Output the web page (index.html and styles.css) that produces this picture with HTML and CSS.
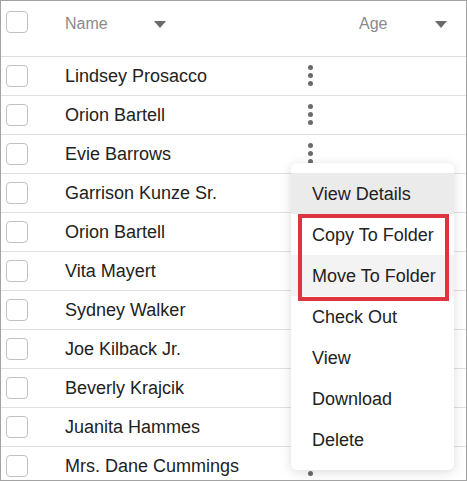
FILE: index.html
```html
<!DOCTYPE html>
<html>
<head>
<meta charset="utf-8">
<link rel="stylesheet" href="styles.css">
</head>
<body>
<div class="grid">
  <div class="head">
    <div class="cb-cell"><span class="cb"></span></div>
    <div class="h-name"><span>Name</span><span class="tri"></span></div>
    <div class="spacer"></div>
    <div class="h-age"><span>Age</span><span class="tri"></span></div>
  </div>
  <div class="row"><div class="cb-cell"><span class="cb"></span></div><div class="name">Lindsey Prosacco</div><div class="kebab"><i></i><i></i><i></i></div></div>
  <div class="row"><div class="cb-cell"><span class="cb"></span></div><div class="name">Orion Bartell</div><div class="kebab"><i></i><i></i><i></i></div></div>
  <div class="row"><div class="cb-cell"><span class="cb"></span></div><div class="name">Evie Barrows</div><div class="kebab"><i></i><i></i><i></i></div></div>
  <div class="row"><div class="cb-cell"><span class="cb"></span></div><div class="name">Garrison Kunze Sr.</div><div class="kebab"><i></i><i></i><i></i></div></div>
  <div class="row"><div class="cb-cell"><span class="cb"></span></div><div class="name">Orion Bartell</div><div class="kebab"><i></i><i></i><i></i></div></div>
  <div class="row"><div class="cb-cell"><span class="cb"></span></div><div class="name">Vita Mayert</div><div class="kebab"><i></i><i></i><i></i></div></div>
  <div class="row"><div class="cb-cell"><span class="cb"></span></div><div class="name">Sydney Walker</div><div class="kebab"><i></i><i></i><i></i></div></div>
  <div class="row"><div class="cb-cell"><span class="cb"></span></div><div class="name">Joe Kilback Jr.</div><div class="kebab"><i></i><i></i><i></i></div></div>
  <div class="row"><div class="cb-cell"><span class="cb"></span></div><div class="name">Beverly Krajcik</div><div class="kebab"><i></i><i></i><i></i></div></div>
  <div class="row"><div class="cb-cell"><span class="cb"></span></div><div class="name">Juanita Hammes</div><div class="kebab"><i></i><i></i><i></i></div></div>
  <div class="row"><div class="cb-cell"><span class="cb"></span></div><div class="name">Mrs. Dane Cummings</div><div class="kebab"><i></i><i></i><i></i></div></div>

  <div class="menu">
    <div class="item active">View Details</div>
    <div class="item">Copy To Folder</div>
    <div class="item hover">Move To Folder</div>
    <div class="item">Check Out</div>
    <div class="item">View</div>
    <div class="item">Download</div>
    <div class="item">Delete</div>
  </div>
  <div class="mark"></div>
</div>
</body>
</html>
```

FILE: styles.css
```css
html, body {
  margin: 0;
  padding: 0;
  background: #fff;
}
body {
  font-family: "Liberation Sans", Arial, sans-serif;
}
.grid {
  position: relative;
  box-sizing: border-box;
  width: 467px;
  height: 481px;
  border: 1px solid #a3a3a3;
  overflow: hidden;
  background: #fff;
}
.head {
  display: flex;
  align-items: flex-start;
  height: 56px;
  box-sizing: border-box;
  padding-top: 10px;
  border-bottom: 1px solid #dedede;
  color: #8a8a8a;
  font-size: 16px;
  line-height: 22px;
}
.cb-cell {
  width: 64px;
  padding-left: 5px;
  box-sizing: border-box;
  display: flex;
  align-items: center;
  flex: none;
}
.cb {
  display: block;
  width: 22px;
  height: 22px;
  box-sizing: border-box;
  border: 1px solid #c2c2c2;
  border-radius: 4px;
  background: #fff;
}
.h-name {
  width: 110px;
  padding-right: 9px;
  margin-top: 2px;
  box-sizing: border-box;
  display: flex;
  justify-content: space-between;
  align-items: center;
}
.spacer { flex: 1; }
.h-age {
  width: 107px;
  padding-right: 19px;
  margin-top: 2px;
  box-sizing: border-box;
  display: flex;
  justify-content: space-between;
  align-items: center;
}
.tri {
  width: 0;
  height: 0;
  border-left: 6.5px solid transparent;
  border-right: 6.5px solid transparent;
  border-top: 7px solid #6a6a6a;
}
.row {
  display: flex;
  align-items: center;
  height: 39px;
  box-sizing: border-box;
  border-bottom: 1px solid #e0e0e0;
  font-size: 18px;
  color: #222;
}
.name {
  width: 223px;
  flex: none;
}
.kebab {
  width: 44px;
  display: flex;
  flex-direction: column;
  align-items: center;
  gap: 3px;
  margin-top: -1px;
}
.kebab i {
  display: block;
  width: 5px;
  height: 5px;
  border-radius: 50%;
  background: #6b6b6b;
}
.menu {
  position: absolute;
  left: 290px;
  top: 162px;
  width: 163px;
  padding: 10px 0;
  background: #fff;
  border-radius: 6px;
  box-shadow: 0 2px 12px rgba(0, 0, 0, 0.14);
}
.item {
  height: 41px;
  line-height: 42px;
  padding-left: 21px;
  font-size: 18px;
  color: #222;
}
.item.active { background: #ebebeb; }
.item.hover { background: #f3f3f3; }
.mark {
  position: absolute;
  left: 297px;
  top: 213px;
  width: 151px;
  height: 87px;
  box-sizing: border-box;
  border: 4.5px solid #df3340;
}
```
